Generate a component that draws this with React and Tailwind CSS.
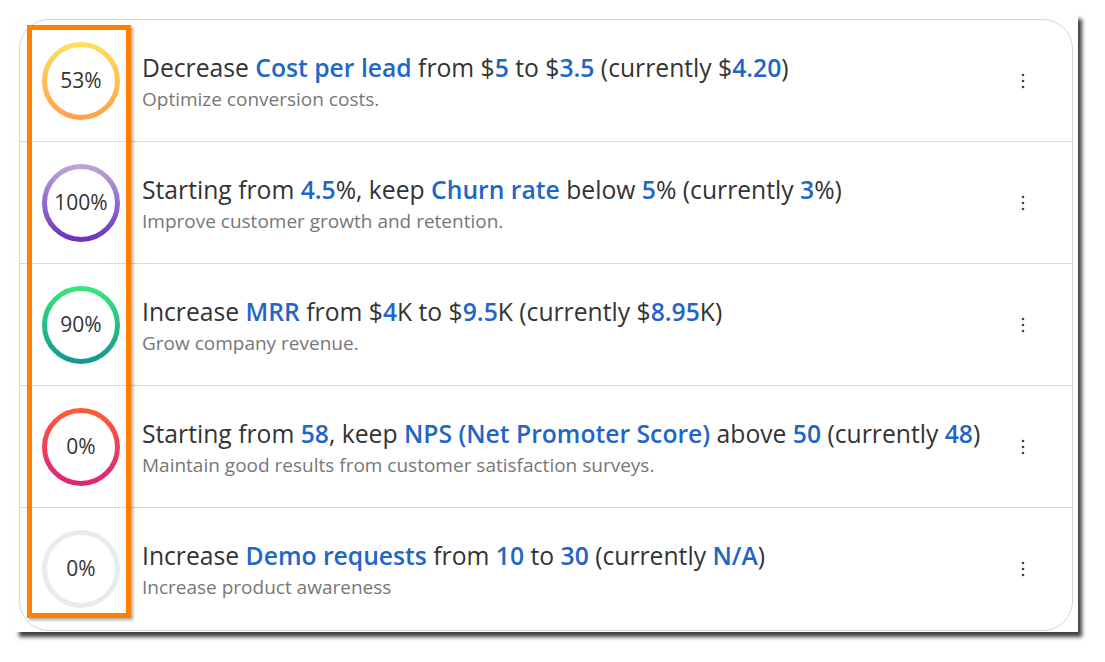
import React from "react";

const goals = [
    {
        pct: "53%",
        from: "#ffdf5a",
        to: "#ffa048",
        parts: [["Decrease "], ["Cost per lead", 1], [" from $"], ["5", 1], [" to $"], ["3.5", 1], [" (currently $"], ["4.20", 1], [")"]],
        sub: "Optimize conversion costs.",
    },
    {
        pct: "100%",
        from: "#bba3dc",
        to: "#6a33bf",
        parts: [["Starting from "], ["4.5", 1], ["%, keep "], ["Churn rate", 1], [" below "], ["5", 1], ["% (currently "], ["3", 1], ["%)"]],
        sub: "Improve customer growth and retention.",
    },
    {
        pct: "90%",
        from: "#38e57c",
        to: "#15978f",
        parts: [["Increase "], ["MRR", 1], [" from $"], ["4", 1], ["K to $"], ["9.5", 1], ["K (currently $"], ["8.95", 1], ["K)"]],
        sub: "Grow company revenue.",
    },
    {
        pct: "0%",
        from: "#ff5b35",
        to: "#dc247c",
        parts: [["Starting from "], ["58", 1], [", keep "], ["NPS (Net Promoter Score)", 1], [" above "], ["50", 1], [" (currently "], ["48", 1], [")"]],
        sub: "Maintain good results from customer satisfaction surveys.",
    },
    {
        pct: "0%",
        from: "#e8ecef",
        to: "#e8ecef",
        parts: [["Increase "], ["Demo requests", 1], [" from "], ["10", 1], [" to "], ["30", 1], [" (currently "], ["N/A", 1], [")"]],
        sub: "Increase product awareness",
    },
];

const Ring = ({ id, from, to, pct }) => (
    <div className="relative w-[80px] h-[80px] shrink-0">
        <svg width="80" height="80" viewBox="0 0 80 80" className="absolute inset-0">
            <defs>
                <linearGradient id={id} x1="0" y1="0" x2="0" y2="1">
                    <stop offset="0" stopColor={from} />
                    <stop offset="1" stopColor={to} />
                </linearGradient>
            </defs>
            <circle cx="40" cy="40" r="36.5" fill="none" stroke={`url(#${id})`} strokeWidth="5" />
        </svg>
        <div className="absolute inset-0 flex items-center justify-center text-[21px] text-[#333]">
            {pct}
        </div>
    </div>
);

const Dots = () => (
    <svg width="4" height="16" viewBox="0 0 4 16" className="text-[#444]">
        <circle cx="2" cy="2" r="1.3" fill="currentColor" />
        <circle cx="2" cy="8" r="1.3" fill="currentColor" />
        <circle cx="2" cy="14" r="1.3" fill="currentColor" />
    </svg>
);

export default function App() {
    return (
        <div className="min-h-screen bg-white pt-[14px] pl-[15px]" style={{ fontFamily: '"Open Sans", sans-serif' }}>
            <div className="relative w-[1063px] h-[618px] bg-white shadow-[4px_5px_4px_rgba(0,0,0,0.75)] pt-[5px] pl-[4px]">
                <div className="w-[1054px] border border-[#cfd8dc] rounded-[30px] overflow-hidden bg-white">
                    {goals.map((g, i) => (
                        <div
                            key={i}
                            className={`flex items-center h-[122px] pl-[21px] pr-[47px] ${i < goals.length - 1 ? "border-b border-[#d5dce0]" : ""}`}
                        >
                            <Ring id={`g${i}`} from={g.from} to={g.to} pct={g.pct} />
                            <div className="flex-1 ml-[21px] pt-[3px]">
                                <div className="text-[24.7px] leading-[30px] text-[#333]">
                                    {g.parts.map(([t, b], j) =>
                                        b ? (
                                            <span key={j} className="font-semibold text-[#1f66c6]">
                                                {t}
                                            </span>
                                        ) : (
                                            <span key={j}>{t}</span>
                                        )
                                    )}
                                </div>
                                <div className="text-[19px] leading-[26px] mt-[3px] text-[#777]">{g.sub}</div>
                            </div>
                            <Dots />
                        </div>
                    ))}
                </div>
                <div className="absolute left-[12px] top-[11px] w-[104px] h-[593px] border-[5px] border-[#ff7f00] shadow-[2px_2px_3px_rgba(0,0,0,0.35)]" />
            </div>
        </div>
    );
}
